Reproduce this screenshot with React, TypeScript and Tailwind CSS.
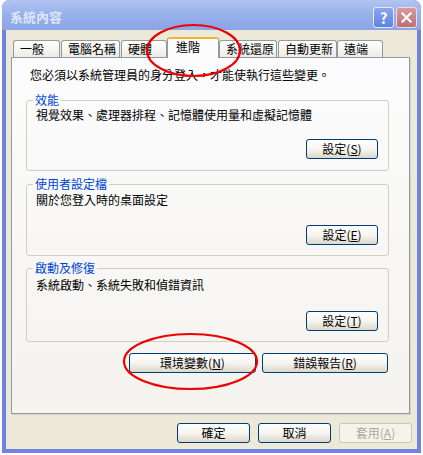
import React from "react";

const tabs = [
  { label: "一般", cls: "ml-[2px] w-[47px]" },
  { label: "電腦名稱", cls: "ml-[1px] w-[59px]" },
  { label: "硬體", cls: "ml-[1px] w-[46px]" },
  { label: "進階", cls: "w-[52px]", selected: true },
  { label: "系統還原", cls: "w-[58px]" },
  { label: "自動更新", cls: "ml-[1px] w-[59px]" },
  { label: "遠端", cls: "w-[46px]" },
];

const XpButton = ({
  children,
  className = "",
  disabled = false,
}: {
  children: React.ReactNode;
  className?: string;
  disabled?: boolean;
}) => (
  <button
    className={`flex h-[20px] items-center justify-center rounded-[3px] border text-[12px] leading-[14px] ${
      disabled
        ? "border-[#c9c7ba] bg-[#f5f4ea] text-[#aca899]"
        : "border-[#003c74] bg-linear-to-b from-white via-[#f6f5f0] to-[#dcd8cb] text-black"
    } ${className}`}
  >
    {children}
  </button>
);

const Group = ({
  title,
  text,
  button,
  className,
  inner,
  textPad,
  btnMb,
}: {
  title: string;
  text: string;
  button: React.ReactNode;
  className: string;
  inner: string;
  textPad: string;
  btnMb: string;
}) => (
  <fieldset className={`rounded-[3px] border border-[#d0d0bf] ${className}`}>
    <legend className="ml-[6px] px-[2px] leading-[14px] text-[#0046d5]">{title}</legend>
    <div className={`flex flex-col ${inner}`}>
      <div className={`pl-[9px] leading-[14px] ${textPad}`}>{text}</div>
      <XpButton className={`mt-auto mr-[10px] w-[72px] self-end ${btnMb}`}>{button}</XpButton>
    </div>
  </fieldset>
);

export default function App() {
  return (
    <div className="relative h-[455px] w-[423px] bg-white font-['Noto_Sans_CJK_TC',sans-serif] text-[12px] text-black">
      <div className="ml-[2px] flex h-[453px] w-[419px] flex-col overflow-hidden rounded-t-[8px] bg-[#7083e1]">
        {/* title bar, inactive */}
        <div className="flex h-[30px] items-start bg-linear-to-b from-[#b1c5f2] via-[#97afeb] to-[#8ba4e6] pt-[7px] pl-[8px] pr-[4px]">
          <span className="mt-[2px] flex-1 text-[13px] font-bold leading-[16px] text-[#dce6f8]">系統內容</span>
          <div className="flex h-[21px] w-[21px] items-center justify-center rounded-[3px] border border-[#e4ebfb] bg-linear-to-b from-[#8aa6ee] to-[#5f82e2] text-[15px] font-bold leading-none text-white">
            ?
          </div>
          <div className="ml-[2px] flex h-[21px] w-[21px] items-center justify-center rounded-[3px] border border-[#ecdbe0] bg-linear-to-b from-[#d79a9e] to-[#bf6f76]">
            <svg width="11" height="11" viewBox="0 0 11 11">
              <path d="M1.5 1.5 L9.5 9.5 M9.5 1.5 L1.5 9.5" stroke="white" strokeWidth="2.2" strokeLinecap="square" />
            </svg>
          </div>
        </div>

        {/* body */}
        <div className="mx-[4px] mb-[4px] flex flex-1 flex-col bg-[#ece9d8] pt-[7px] pl-[5px]">
          <div className="flex h-[20px] items-end">
            {tabs.map((t) =>
              t.selected ? (
                <div
                  key={t.label}
                  className={`relative z-10 -mb-[1px] h-[21px] rounded-t-[3px] border-x border-t-2 border-x-[#919b9c] border-t-[#f5b335] bg-[#fcfcfe] pl-[8px] leading-[16px] ${t.cls}`}
                >
                  {t.label}
                </div>
              ) : (
                <div
                  key={t.label}
                  className={`h-[17px] rounded-t-[3px] border border-b-0 border-[#919b9c] bg-linear-to-b from-white to-[#ecebe6] pl-[6px] leading-[16px] ${t.cls}`}
                >
                  {t.label}
                </div>
              )
            )}
          </div>

          <div className="h-[357px] w-[399px] border border-[#919b9c] bg-linear-to-b from-[#fcfcfe] to-[#f4f3ee] shadow-[1px_1px_0_#d6d3c4]">
            <div className="pt-[10px] pl-[18px] leading-[14px]">
              您必須以系統管理員的身分登入，才能使執行這些變更。
            </div>
            <div className="ml-[14px] w-[363px]">
              <Group
                title="效能"
                text="視覺效果、處理器排程、記憶體使用量和虛擬記憶體"
                button={<>設定(<u>S</u>)</>}
                className="mt-[11px]"
                inner="h-[63px]"
                textPad="pt-[1px]"
                btnMb="mb-[11px]"
              />
              <Group
                title="使用者設定檔"
                text="關於您登入時的桌面設定"
                button={<>設定(<u>E</u>)</>}
                className="mt-[6px]"
                inner="h-[64px]"
                textPad="pt-[2px]"
                btnMb="mb-[10px]"
              />
              <Group
                title="啟動及修復"
                text="系統啟動、系統失敗和偵錯資訊"
                button={<>設定(<u>T</u>)</>}
                className="mt-[5px]"
                inner="h-[66px]"
                textPad="pt-[3px]"
                btnMb="mb-[10px]"
              />
              <div className="mt-[11px] flex justify-end gap-[6px] pr-[1px]">
                <XpButton className="w-[127px]">
                  環境變數(<u>N</u>)
                </XpButton>
                <XpButton className="w-[126px]">
                  錯誤報告(<u>R</u>)
                </XpButton>
              </div>
            </div>
          </div>

          <div className="mt-[9px] flex justify-end gap-[8px] pr-[5px]">
            <XpButton className="w-[73px]">確定</XpButton>
            <XpButton className="w-[73px]">取消</XpButton>
            <XpButton className="w-[73px]" disabled>
              套用(<u>A</u>)
            </XpButton>
          </div>
        </div>
      </div>

      {/* red annotation circles */}
      <svg className="pointer-events-none absolute inset-0" width="423" height="455">
        <ellipse cx="193.5" cy="50.5" rx="46.5" ry="25.5" fill="none" stroke="#ee0000" strokeWidth="2.2" />
        <ellipse cx="190.5" cy="361.5" rx="66.5" ry="27.5" fill="none" stroke="#ee0000" strokeWidth="2.2" />
      </svg>
    </div>
  );
}
